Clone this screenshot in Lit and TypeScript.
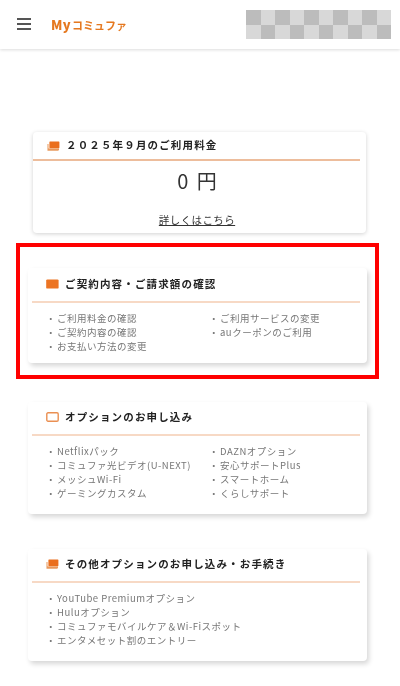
import { LitElement, html, css } from "lit";
import { customElement } from "lit/decorators.js";

type Icon = "stack" | "solid" | "outline";

const icon = (k: Icon) => {
  if (k === "stack")
    return html`<svg class="ic" viewBox="0 0 13 10" width="13" height="10">
      <path d="M1 3V9H11" fill="none" stroke="#eeb487" stroke-width="1.4"/>
      <rect x="2.4" y="0.4" width="10" height="6.8" rx="0.6" fill="#ea6f1e"/>
      <rect x="1" y="7.4" width="11" height="2" fill="#e9985c"/>
    </svg>`;
  if (k === "outline")
    return html`<svg class="ic" viewBox="0 0 13 10" width="13" height="10">
      <rect x="0.8" y="0.8" width="11.4" height="8.4" rx="1.2" fill="#fff" stroke="#ea8f52" stroke-width="1.4"/>
    </svg>`;
  return html`<svg class="ic" viewBox="0 0 13 10" width="13" height="10">
    <rect x="0.2" y="0.4" width="12.4" height="9.2" rx="1.2" fill="#ec7423"/>
  </svg>`;
};

@customElement("app-root")
export class AppRoot extends LitElement {
  static styles = css`
    :host {
      display: block;
      width: 400px;
      height: 686px;
      overflow: hidden;
      background: #fff;
      font-family: "Noto Sans CJK JP", "Noto Sans", sans-serif;
      color: #333;
    }
    .blur { filter: blur(0.45px); }
    header {
      height: 49px;
      display: flex;
      align-items: center;
      box-shadow: 0 1px 3px rgba(0, 0, 0, 0.14);
      padding-left: 17px;
      box-sizing: border-box;
    }
    .burger { width: 14px; height: 12px; display: flex; flex-direction: column; justify-content: space-between; margin-top: -1px; }
    .burger i { display: block; height: 2px; background: #555; }
    .logo { margin-left: 20px; font-size: 11px; font-weight: 700; color: #e5781f; line-height: 1; white-space: nowrap; margin-top: -1px; display: flex; align-items: baseline; gap: 1px; }
    .logo b { font-size: 13px; letter-spacing: 0.4px; }
    .checks {
      margin-left: auto;
      margin-right: 9px;
      width: 145px;
      height: 29px;
      display: grid;
      grid-template-columns: repeat(10, 14.5px);
      grid-template-rows: 14.5px 14.5px;
    }
    .checks i.d { background: #bcbcbc; }
    .checks i.l { background: #d8d8d8; }
    main { display: flex; flex-direction: column; padding-top: 83px; }
    .card {
      background: #fff;
      border-radius: 4px;
      box-shadow: 2px 3px 5px rgba(0, 0, 0, 0.16);
      box-sizing: border-box;
    }
    .first { margin-left: 33px; width: 333px; height: 101px; box-shadow: 0 1px 4px rgba(0,0,0,.18); }
    .frame {
      margin: 10px 0 0 16px;
      width: 363px;
      height: 136px;
      box-sizing: border-box;
      border: 4px solid #f00;
      padding: 21px 0 0 8px;
    }
    .frame .card { width: 339px; height: 95px; padding-top: 1px; }
    .plain { margin-left: 28px; width: 339px; height: 112px; }
    .c3 { margin-top: 23px; }
    .c4 { margin-top: 35px; }
    .hd {
      display: flex;
      align-items: center;
      gap: 6px;
      height: 34px;
      padding: 0 0 2px 14px;
      box-sizing: border-box;
      margin: 0 7px 0 4px;
      border-bottom: 2px solid #f7d9c5;
      font-size: 10.5px;
      font-weight: 700;
      letter-spacing: 1.15px;
      color: #222;
      line-height: 1;
      white-space: nowrap;
    }
    .first .hd { margin: 0 6px 0 0; padding: 0 0 0 14px; height: 29px; border-bottom-color: #edbd9c; gap: 6px; }
    .amount { text-align: center; font-size: 20px; line-height: 1; margin-top: 10px; padding-right: 3px; letter-spacing: 2px; color: #333; }
    .link { display: block; text-align: center; margin-top: 24px; padding-right: 5px; font-size: 10.5px; letter-spacing: 0.4px; line-height: 1; color: #333; text-decoration: underline; }
    .list {
      display: grid;
      grid-template-columns: 163px 1fr;
      padding: 8px 0 0 18px;
      font-size: 9.5px;
      letter-spacing: 0.5px;
      line-height: 14px;
      color: #777;
      white-space: nowrap;
    }
    .list.one { grid-template-columns: 1fr; }
    .list span::before { content: "・"; letter-spacing: 1.5px; }
  `;

  private list(items: string[], one = false) {
    return html`<div class="list ${one ? "one" : ""}">${items.map((t) => html`<span>${t}</span>`)}</div>`;
  }

  render() {
    return html`
      <div class="blur">
        <header>
          <div class="burger"><i></i><i></i><i></i></div>
          <div class="logo"><b>My</b><span>コミュファ</span></div>
          <div class="checks">
            ${Array.from({ length: 20 }, (_, i) => html`<i class="${(i + (i >= 10 ? 1 : 0)) % 2 ? "l" : "d"}"></i>`)}
          </div>
        </header>
        <main>
          <section class="card first">
            <div class="hd">${icon("stack")}<span>２０２５年９月のご利用料金</span></div>
            <div class="amount">0 円</div>
            <a class="link">詳しくはこちら</a>
          </section>
          <div class="frame">
            <section class="card">
              <div class="hd">${icon("solid")}<span>ご契約内容・ご請求額の確認</span></div>
              ${this.list(["ご利用料金の確認", "ご利用サービスの変更", "ご契約内容の確認", "auクーポンのご利用", "お支払い方法の変更"])}
            </section>
          </div>
          <section class="card plain c3">
            <div class="hd">${icon("outline")}<span>オプションのお申し込み</span></div>
            ${this.list(["Netflixパック", "DAZNオプション", "コミュファ光ビデオ(U-NEXT)", "安心サポートPlus", "メッシュWi-Fi", "スマートホーム", "ゲーミングカスタム", "くらしサポート"])}
          </section>
          <section class="card plain c4">
            <div class="hd">${icon("stack")}<span>その他オプションのお申し込み・お手続き</span></div>
            ${this.list(["YouTube Premiumオプション", "Huluオプション", "コミュファモバイルケア＆Wi-Fiスポット", "エンタメセット割のエントリー"], true)}
          </section>
        </main>
      </div>
    `;
  }
}
